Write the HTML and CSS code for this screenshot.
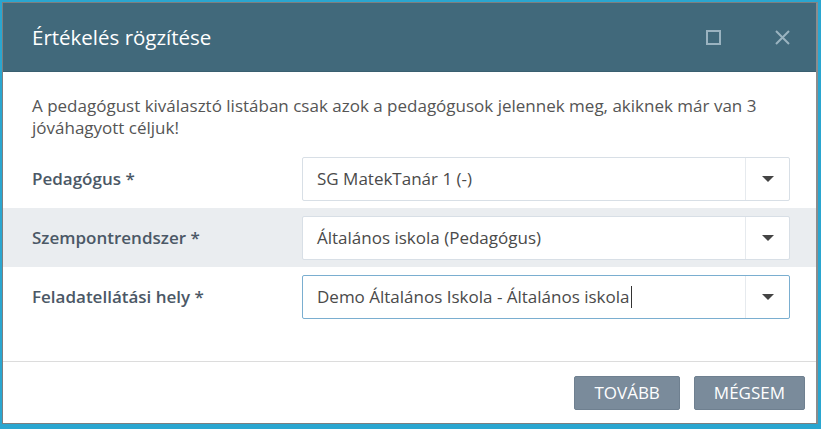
FILE: index.html
```html
<!DOCTYPE html>
<html lang="hu">
<head>
<meta charset="utf-8">
<title>Értékelés rögzítése</title>
<link rel="stylesheet" href="styles.css">
</head>
<body>
<div class="frame">
  <div class="dialog">
    <div class="header">
      <h1 class="title">Értékelés rögzítése</h1>
      <div class="tools">
        <svg class="tool" width="15" height="15" viewBox="0 0 15 15"><rect x="1" y="1" width="13" height="13" fill="none" stroke="#9ab3c0" stroke-width="2"/></svg>
        <svg class="tool" width="15" height="15" viewBox="0 0 15 15"><path d="M1 1 L14 14 M14 1 L1 14" stroke="#9ab3c0" stroke-width="2"/></svg>
      </div>
    </div>
    <div class="content">
      <p class="note">A pedagógust kiválasztó listában csak azok a pedagógusok jelennek meg, akiknek már van 3 jóváhagyott céljuk!</p>
      <div class="row">
        <div class="label">Pedagógus *</div>
        <div class="select"><span class="value">SG MatekTanár 1 (-)</span><span class="arrow"><i></i></span></div>
      </div>
      <div class="row alt">
        <div class="label">Szempontrendszer *</div>
        <div class="select"><span class="value">Általános iskola (Pedagógus)</span><span class="arrow"><i></i></span></div>
      </div>
      <div class="row">
        <div class="label">Feladatellátási hely *</div>
        <div class="select focus"><span class="value">Demo Általános Iskola - Általános iskola<b class="caret"></b></span><span class="arrow"><i></i></span></div>
      </div>
    </div>
    <div class="footer">
      <button class="btn">TOVÁBB</button>
      <button class="btn">MÉGSEM</button>
    </div>
  </div>
</div>
</body>
</html>
```
FILE: styles.css
```css
html, body { margin: 0; padding: 0; }
body {
  background: #2aa6d0;
  font-family: "Open Sans", "Liberation Sans", sans-serif;
  width: 821px;
  height: 429px;
  overflow: hidden;
}
.frame {
  padding: 2px 3px 5px 2px;
  height: 422px;
}
.dialog {
  height: 420px;
  border: 1px solid #7d7f80;
  border-right: 2px solid #8a8c8d;
  background: #fff;
  display: flex;
  flex-direction: column;
}
.header {
  background: #41697b;
  height: 68px;
  display: flex;
  align-items: center;
  justify-content: space-between;
  padding: 0 26px 0 29px;
  border-bottom: 1px solid #3a5f70;
}
.title {
  margin: 0;
  font-weight: 400;
  font-size: 20.5px;
  color: #fff;
}
.tools { display: flex; gap: 54px; align-items: center; }
.tool { display: block; }
.content {
  flex: 1;
  padding-top: 23px;
}
.note {
  margin: 0 0 10px;
  padding: 0 29px;
  font-size: 17px;
  line-height: 22px;
  color: #555;
}
.row {
  display: flex;
  align-items: center;
  height: 59px;
  padding: 0 26px 0 29px;
}
.row.alt { background: #eaedf0; }
.label {
  width: 270px;
  font-size: 17px;
  font-weight: 600;
  color: #4b5866;
}
.select {
  flex: 1;
  height: 44px;
  box-sizing: border-box;
  border: 1px solid #d8dfe6;
  border-radius: 2px;
  background: #fff;
  display: flex;
  align-items: center;
}
.select.focus { border-color: #7aaed0; }
.value {
  flex: 1;
  padding-left: 14px;
  font-size: 17px;
  color: #4a4a4a;
  display: flex;
  align-items: center;
}
.caret {
  display: inline-block;
  width: 1px;
  height: 22px;
  background: #333;
  margin-left: 1px;
}
.arrow {
  width: 43px;
  align-self: stretch;
  border-left: 1px solid #e6eaee;
  display: flex;
  align-items: center;
  justify-content: center;
}
.arrow i {
  width: 0; height: 0;
  border-left: 6px solid transparent;
  border-right: 6px solid transparent;
  border-top: 6px solid #444;
}
.footer {
  border-top: 1px solid #dcdcdc;
  height: 62px;
  display: flex;
  justify-content: flex-end;
  align-items: center;
  gap: 14px;
  padding: 0 11px 0 0;
  box-sizing: border-box;
}
.btn {
  font-family: "Open Sans", "Liberation Sans", sans-serif;
  font-size: 17px;
  color: #fff;
  background: #7a8b9b;
  border: 1px solid #6f8090;
  border-radius: 2px;
  height: 34px;
  padding: 0 19px;
  cursor: pointer;
}
```
